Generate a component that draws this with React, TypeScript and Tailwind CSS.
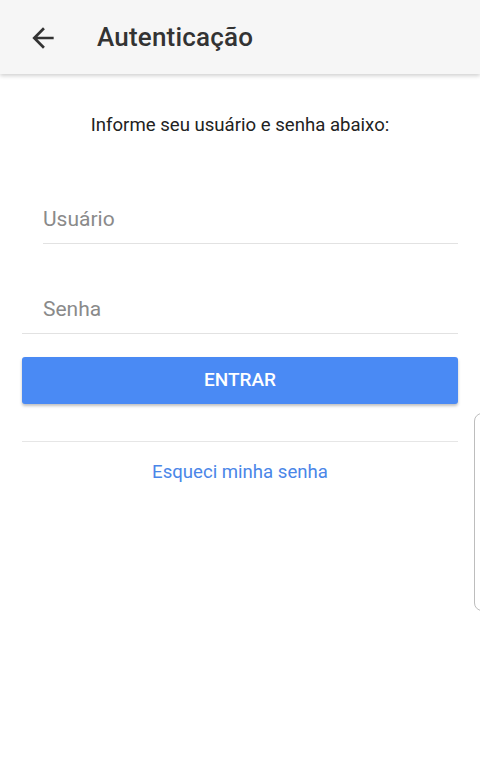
export default function App() {
  return (
    <div className="relative min-h-[775px] bg-white font-['Roboto',sans-serif]">
      <header className="relative z-10 flex h-[74px] items-center bg-[#f6f6f6] shadow-[0_2px_4px_rgba(0,0,0,0.18)]">
        <button className="ml-[27px] mt-px flex h-8 w-8 items-center justify-center text-[#333]" aria-label="Voltar">
          <svg viewBox="0 0 24 24" width="32" height="32" fill="currentColor">
            <path d="M20 11H7.83l5.59-5.59L12 4l-8 8 8 8 1.41-1.41L7.83 13H20v-2z" />
          </svg>
        </button>
        <h1 className="ml-[38px] mt-px text-[26px] font-medium tracking-[0.2px] text-[#333]">Autenticação</h1>
      </header>

      <main className="flex flex-col px-[22px] pt-[39px]">
        <p className="text-center text-[18.6px] leading-6 text-[#222]">Informe seu usuário e senha abaixo:</p>

        <div className="ml-[21px] mt-[59px] flex h-12 items-center border-b border-[#e2e2e2]">
          <input
            className="w-full bg-transparent text-[21px] text-[#333] outline-none placeholder:text-[#8a8a8a]"
            placeholder="Usuário"
          />
        </div>

        <div className="mt-[42px] flex h-12 items-center border-b border-[#e2e2e2] pl-[21px]">
          <input
            type="password"
            className="w-full bg-transparent text-[21px] text-[#333] outline-none placeholder:text-[#8a8a8a]"
            placeholder="Senha"
          />
        </div>

        <button className="mt-[23px] h-[47px] rounded-[3px] bg-[#4a8af4] text-[19px] font-medium text-white shadow-[0_2px_3px_rgba(0,0,0,0.25)]">
          ENTRAR
        </button>

        <div className="mt-[37px] h-px bg-[#e6e6e6]" />

        <a className="mt-[18px] text-center text-[18.6px] leading-6 text-[#4a86e8]" href="#">
          Esqueci minha senha
        </a>
      </main>

      <div className="absolute right-[-10px] top-[413px] h-[198px] w-4 rounded-[8px] border border-[#bdbdbd] bg-white" />
    </div>
  )
}
